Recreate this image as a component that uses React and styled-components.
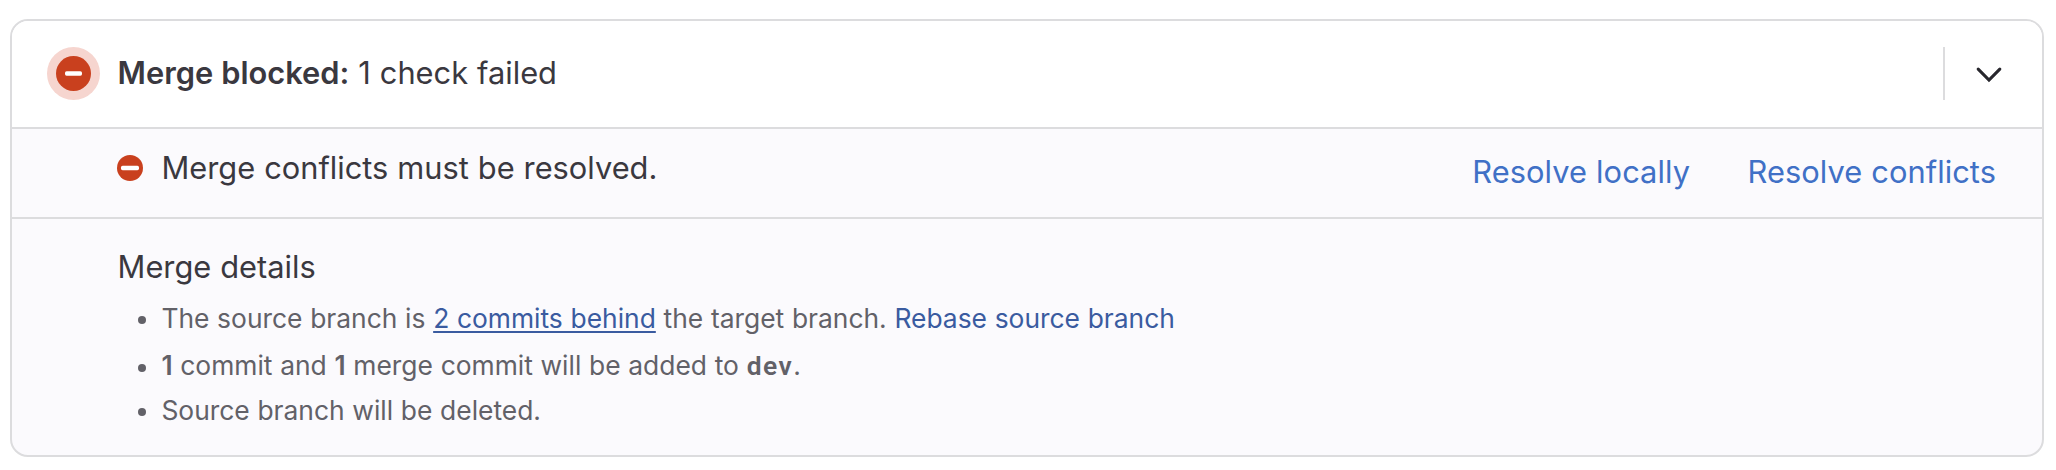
import React from "react";
import styled, { createGlobalStyle } from "styled-components";

const GlobalStyle = createGlobalStyle`
  * { box-sizing: border-box; }
  body {
    margin: 0;
    background: #fff;
    color: #3a383f;
    font-family: Inter, "Liberation Sans", sans-serif;
    font-size: 30.8px;
    line-height: 44px;
    word-spacing: 0.3px;
  }
`;

const Page = styled.main`
  padding: 19px 12px 13px 10px;
`;

const Card = styled.section`
  height: 438px;
  border: 2px solid #dcdcde;
  border-radius: 18px;
  overflow: hidden;
  background: #fbfafd;
`;

const Header = styled.header`
  display: flex;
  align-items: center;
  height: 108px;
  padding: 0 27px 1px 35px;
  border-bottom: 2px solid #dcdcde;
  background: #fff;
`;

const Halo = styled.span`
  display: flex;
  align-items: center;
  justify-content: center;
  flex: none;
  width: 53px;
  height: 53px;
  border-radius: 50%;
  background: #f6d5cf;
`;

const FailedSvg = styled.svg`
  display: block;
  flex: none;
  width: ${(p) => p.$size}px;
  height: ${(p) => p.$size}px;
`;

const Title = styled.h1`
  margin: 0 0 2px 17.6px;
  font-size: 30.8px;
  font-weight: 400;
  white-space: nowrap;
`;

const Strong = styled.strong`
  font-weight: 600;
`;

const ToggleArea = styled.div`
  display: flex;
  align-items: center;
  margin-left: auto;
  height: 53px;
  padding-left: 17px;
  border-left: 2px solid #dcdcde;
`;

const Toggle = styled.button`
  display: flex;
  align-items: center;
  justify-content: center;
  width: 53px;
  height: 53px;
  padding: 2px 0 0;
  border: 0;
  background: none;
  color: #28272d;
`;

const CheckRow = styled.div`
  display: flex;
  align-items: center;
  height: 90px;
  padding: 0 46px 0 105px;
  border-bottom: 2px solid #dcdcde;
`;

const CheckLabel = styled.div`
  display: flex;
  align-items: center;
  gap: 18.5px;
  margin-bottom: 10px;
`;

const Actions = styled.div`
  display: flex;
  gap: 57.5px;
  margin: 0 0 3px auto;
`;

const Action = styled.a`
  color: #4070c6;
  text-decoration: none;
  letter-spacing: 0.06px;
`;

const Details = styled.div`
  padding: 26px 0 0 105.6px;
`;

const DetailsTitle = styled.h2`
  margin: 0 0 7px;
  font-size: 30.8px;
  font-weight: 400;
`;

const List = styled.ul`
  margin: 0;
  padding: 0;
  list-style: none;
  color: #626168;
  font-size: 26.4px;
`;

const Item = styled.li`
  display: flex;
  align-items: center;
  margin-bottom: ${(p) => p.$gap || 0}px;
  white-space: pre;

  &::before {
    content: "";
    width: 8px;
    height: 8px;
    margin: 4px 15.4px 0 20.4px;
    border-radius: 50%;
    background: #626168;
  }
`;

const TextLink = styled.a`
  color: #3a5ba0;
  text-decoration: ${(p) => (p.$underlined ? "underline" : "none")};
  text-decoration-thickness: 2px;
  text-underline-offset: 3px;
  text-decoration-skip-ink: none;
`;

const Branch = styled.code`
  font-family: Roboto, Inter, sans-serif;
  font-size: 26.4px;
  font-weight: 600;
  letter-spacing: 1.5px;
`;

function FailedIcon({ size, barWidth, barHeight }) {
  return (
    <FailedSvg $size={size} viewBox={`0 0 ${size} ${size}`}>
      <circle cx={size / 2} cy={size / 2} r={size / 2} fill="#c9401e" />
      <rect
        x={(size - barWidth) / 2}
        y={(size - barHeight) / 2}
        width={barWidth}
        height={barHeight}
        rx="1.6"
        fill="#fff"
      />
    </FailedSvg>
  );
}

export default function App() {
  return (
    <>
      <GlobalStyle />
      <Page>
        <Card>
          <Header>
            <Halo>
              <FailedIcon size={35} barWidth={17} barHeight={4.4} />
            </Halo>
            <Title>
              <Strong>Merge blocked:</Strong> 1 check failed
            </Title>
            <ToggleArea>
              <Toggle aria-label="Collapse merge details">
                <svg width="26" height="18" viewBox="0 0 26 18" fill="none">
                  <path
                    d="M2.2 3.2 13 14 23.8 3.2"
                    stroke="currentColor"
                    strokeWidth="3.1"
                    strokeLinecap="round"
                  />
                </svg>
              </Toggle>
            </ToggleArea>
          </Header>
          <CheckRow>
            <CheckLabel>
              <FailedIcon size={26} barWidth={18} barHeight={4.4} />
              <span>Merge conflicts must be resolved.</span>
            </CheckLabel>
            <Actions>
              <Action>Resolve locally</Action>
              <Action>Resolve conflicts</Action>
            </Actions>
          </CheckRow>
          <Details>
            <DetailsTitle>Merge details</DetailsTitle>
            <List>
              <Item $gap={3}>
                <span>
                  The source branch is{" "}
                  <TextLink $underlined>2 commits behind</TextLink> the target
                  branch. <TextLink>Rebase source branch</TextLink>
                </span>
              </Item>
              <Item>
                <span>
                  <Strong>1</Strong> commit and <Strong>1</Strong> merge commit
                  will be added to <Branch>dev</Branch>.
                </span>
              </Item>
              <Item>
                <span>Source branch will be deleted.</span>
              </Item>
            </List>
          </Details>
        </Card>
      </Page>
    </>
  );
}
